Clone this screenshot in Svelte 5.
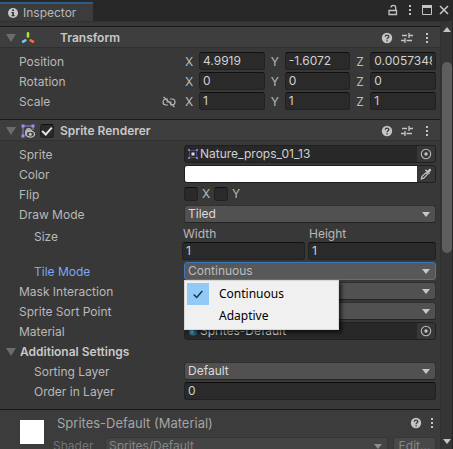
<script>
  const transform = [
    { name: 'Position', values: ['4.9919', '-1.6072', '0.0057348'] },
    { name: 'Rotation', values: ['0', '0', '0'] },
    { name: 'Scale', values: ['1', '1', '1'], link: true }
  ];
  const axes = ['X', 'Y', 'Z'];
  const modes = ['Continuous', 'Adaptive'];
  let tileMode = $state('Continuous');
</script>

{#snippet dots()}
  <svg width="4" height="12" viewBox="0 0 4 12" fill="currentColor"><path d="M1 1h2v2H1zM1 5h2v2H1zM1 9h2v2H1z" /></svg>
{/snippet}

{#snippet help()}
  <svg width="12" height="12" viewBox="0 0 12 12">
    <circle cx="6" cy="6" r="5.2" fill="#c4c4c4" />
    <path d="M4.3 4.8C4.3 2.6 7.8 2.7 7.8 4.6 7.8 5.8 6.1 5.8 6.1 7.2M6.1 8.2v1.3" fill="none" stroke="#3e3e3e" stroke-width="1.4" />
  </svg>
{/snippet}

{#snippet sliders()}
  <svg width="12" height="12" viewBox="0 0 12 12" fill="none" stroke="#c4c4c4" stroke-width="1.3">
    <path d="M1 3.5h5M8.5 3.5H12M8 1v5M0 8.5h3.5M5.5 8.5H11M4 6v5" />
  </svg>
{/snippet}

{#snippet tri()}
  <svg class="tri" width="10" height="8" viewBox="0 0 10 8"><path d="M0 0h10L5 8z" fill="#6c6c6c" /></svg>
{/snippet}

{#snippet tools()}
  <div class="tools">
    <button aria-label="Help">{@render help()}</button>
    <button aria-label="Presets">{@render sliders()}</button>
    <button aria-label="More">{@render dots()}</button>
  </div>
{/snippet}

{#snippet arrow()}
  <svg class="arrow" width="8" height="5" viewBox="0 0 8 5"><path d="M0 0h8L4 5z" fill="currentColor" /></svg>
{/snippet}

{#snippet target()}
  <button class="pick" aria-label="Select object">
    <svg width="12" height="12" viewBox="0 0 12 12"><circle cx="6" cy="6" r="4.7" fill="none" stroke="#b8b8b8" stroke-width="1.1" /><circle cx="6" cy="6" r="1.7" fill="#c4c4c4" /></svg>
  </button>
{/snippet}

{#snippet dropdown(id, value)}
  <div class="drop">
    <select {id}><option>{value}</option></select>
    {@render arrow()}
  </div>
{/snippet}

<div class="window">
  <header class="tabs">
    <div class="tab">
      <svg width="10" height="10" viewBox="0 0 10 10"><circle cx="5" cy="5" r="5" fill="#c8c8c8" /><path d="M4.2 1.4h1.8v1.5H4.2zM3.4 4h2.5v3.2h.8v1H3.4v-1h.8V5h-.8z" fill="#333" /></svg>
      <span>Inspector</span>
    </div>
    <div class="winbtns">
      <button aria-label="Lock"><svg width="10" height="12" viewBox="0 0 10 12" fill="none" stroke="currentColor" stroke-width="1.3"><path d="M1 6.5h7.5v4H1zM7.7 6V3.6C7.7.7 3 .7 3 3.4" /></svg></button>
      <button aria-label="More">{@render dots()}</button>
      <button aria-label="Maximize"><svg width="10" height="10" viewBox="0 0 10 10"><path d="M.5.5h9v9h-9z" fill="none" stroke="currentColor" /><path d="M0 0h10v3H0z" fill="currentColor" /></svg></button>
      <button aria-label="Close"><svg width="10" height="10" viewBox="0 0 10 10"><path d="M1 1l8 8M9 1L1 9" stroke="currentColor" stroke-width="1.6" /></svg></button>
    </div>
  </header>

  <div class="body">
    <main>
      <div class="head">
        {@render tri()}
        <svg class="icon" width="14" height="14" viewBox="0 0 14 14" fill="none" stroke-width="2.6" stroke-linecap="round">
          <path d="M7 2.4v3" stroke="#a5e635" /><path d="M4.4 9.3L2 10.6" stroke="#73c9f5" /><path d="M9.6 9.3L12 10.6" stroke="#ff6b3d" />
        </svg>
        <h2>Transform</h2>
        {@render tools()}
      </div>
      <section class="rows">
        {#each transform as t}
          <div class="row">
            <span class="label">{t.name}
              {#if t.link}
                <svg class="link" width="14" height="12" viewBox="0 0 14 12" fill="none" stroke="#b4b4b4" stroke-width="1.2">
                  <path d="M6 3H4a3 3 0 0 0 0 6h2M8 3h2a3 3 0 0 1 0 6H8M4.5 6h5M1.5 1l11 10" />
                </svg>
              {/if}
            </span>
            <div class="vector">
              {#each t.values as v, i}
                <label><span>{axes[i]}</span><input type="text" value={v} /></label>
              {/each}
            </div>
          </div>
        {/each}
      </section>

      <div class="head">
        {@render tri()}
        <svg class="icon" width="14" height="14" viewBox="0 0 14 14">
          <path d="M2 12V2h10v4" fill="none" stroke="#9a7fe0" />
          <path d="M.5.5h3v3h-3zM10.5.5h3v3h-3zM.5 10.5h3v3h-3z" fill="#a58af0" />
          <path d="M4 12V7l2-3h3l2 2v2L6 9z" fill="#a8a8a8" />
          <ellipse cx="9.3" cy="10.2" rx="4.2" ry="3" fill="#3e3e3e" stroke="#c4c4c4" stroke-width="1.2" /><circle cx="9.3" cy="10.2" r="1.5" fill="#c4c4c4" />
        </svg>
        <input class="check" type="checkbox" aria-label="Enable Sprite Renderer" checked />
        <h2>Sprite Renderer</h2>
        {@render tools()}
      </div>
      <section class="rows">
        <div class="row">
          <label class="label" for="sprite">Sprite</label>
          <div class="object">
            <svg width="10" height="10" viewBox="0 0 10 10"><path d="M1.5 1.5h7v7h-7z" fill="none" stroke="#51477a" /><path d="M0 0h2v2H0zM8 0h2v2H8zM0 8h2v2H0zM8 8h2v2H8z" fill="#8a76c8" /><path d="M3.5 3.5h3v3h-3z" fill="#ddd" /></svg>
            <input id="sprite" type="text" value="Nature_props_01_13" readonly />
            {@render target()}
          </div>
        </div>
        <div class="row">
          <span class="label">Color</span>
          <div class="object color">
            <button class="swatch" aria-label="Color"></button>
            <button class="pick" aria-label="Pick color">
              <svg width="12" height="12" viewBox="0 0 12 12" fill="#c4c4c4"><path d="M7.5 2.8L9 1.2c1.2-1.2 3 .6 1.8 1.8L9.2 4.5l.7.8-1 1-4-4 1-1z" /><path d="M6.2 4.6l1.5 1.5-4 4-2.4.7.7-2.4z" fill="none" stroke="#c4c4c4" stroke-width="1.2" /></svg>
            </button>
          </div>
        </div>
        <div class="row">
          <span class="label">Flip</span>
          <div class="flip">
            <label><input class="check" type="checkbox" /><span>X</span></label>
            <label><input class="check" type="checkbox" /><span>Y</span></label>
          </div>
        </div>
        <div class="row">
          <label class="label" for="draw">Draw Mode</label>
          {@render dropdown('draw', 'Tiled')}
        </div>
        <div class="row sub">
          <span class="label">Size</span>
          <div class="size">
            <label><span>Width</span><input type="text" value="1" /></label>
            <label><span>Height</span><input type="text" value="1" /></label>
          </div>
        </div>
        <div class="row sub active">
          <label class="label" for="tile">Tile Mode</label>
          <div class="drop">
            <select id="tile" bind:value={tileMode}>
              {#each modes as m}<option>{m}</option>{/each}
            </select>
            {@render arrow()}
            <div class="menu" role="menu">
              {#each modes as m}
                <button role="menuitemradio" aria-checked={m === tileMode} onclick={() => (tileMode = m)}>
                  <span class="mark" class:on={m === tileMode}>
                    {#if m === tileMode}<svg width="10" height="9" viewBox="0 0 10 9"><path d="M.7 4.5L3.7 7.5 9.3 1" fill="none" stroke="#16384f" stroke-width="1.5" /></svg>{/if}
                  </span>{m}
                </button>
              {/each}
            </div>
          </div>
        </div>
        <div class="row">
          <label class="label" for="mask">Mask Interaction</label>
          {@render dropdown('mask', 'None')}
        </div>
        <div class="row">
          <label class="label" for="sort">Sprite Sort Point</label>
          {@render dropdown('sort', 'Center')}
        </div>
        <div class="row">
          <label class="label" for="material">Material</label>
          <div class="object">
            <svg width="10" height="10" viewBox="0 0 10 10"><circle cx="5" cy="5" r="4.6" fill="#2d6a8c" /><circle cx="4" cy="5" r="2.4" fill="#6ec3ea" /></svg>
            <input id="material" type="text" value="Sprites-Default" readonly />
            {@render target()}
          </div>
        </div>
        <div class="fold">{@render tri()}<h3>Additional Settings</h3></div>
        <div class="row sub">
          <label class="label" for="layer">Sorting Layer</label>
          {@render dropdown('layer', 'Default')}
        </div>
        <div class="row sub">
          <label class="label" for="order">Order in Layer</label>
          <input id="order" type="text" value="0" />
        </div>
      </section>

      <section class="material">
        <div class="thumb"></div>
        <div class="minfo">
          <div class="mtitle">
            <h2>Sprites-Default (Material)</h2>
            <button aria-label="Help">{@render help()}</button>
            <button aria-label="More">{@render dots()}</button>
          </div>
          <div class="shader">
            <label for="shader">Shader</label>
            {@render dropdown('shader', 'Sprites/Default')}
            <button class="edit">Edit...</button>
          </div>
        </div>
      </section>
    </main>

    <aside class="scroll">
      <svg width="8" height="5" viewBox="0 0 8 5"><path d="M0 5h8L4 0z" fill="#c4c4c4" /></svg>
      <div class="track"><div class="thumbbar"></div></div>
      <svg width="8" height="5" viewBox="0 0 8 5"><path d="M0 0h8L4 5z" fill="#c4c4c4" /></svg>
    </aside>
  </div>
</div>

<style>
  .window {
    height: 100vh;
    overflow: hidden;
    display: flex;
    flex-direction: column;
    background: #383838;
    color: #b8b8b8;
    font: 12px/18px Inter, sans-serif;
  }
  .window * { box-sizing: border-box; }
  button, input, select { font: inherit; color: inherit; margin: 0; }
  button { background: none; border: 0; padding: 0; display: flex; align-items: center; justify-content: center; }
  svg { display: block; flex: none; }
  h2, h3 { margin: 0; font-size: 12px; font-weight: 600; color: #c8c8c8; }

  .tabs { display: flex; justify-content: space-between; height: 21px; flex: none; background: #282828; }
  .tab {
    display: flex; align-items: center; gap: 5px;
    margin-top: 2px; padding: 0 17px 0 8px;
    background: #3c3c3c; border-top: 2px solid #2c5d87;
  }
  .winbtns { display: flex; align-items: center; gap: 7px; padding: 0 4px 1px 0; color: #c4c4c4; }
  .winbtns button { min-width: 10px; }

  .body { flex: 1; min-height: 0; display: flex; border-top: 1px solid #303030; }
  main { flex: 1; min-width: 0; overflow: hidden; padding-top: 4px; border-right: 1px solid #303030; }
  .head {
    display: flex; align-items: center; height: 22px; padding: 1px 11px 0 6px;
    background: #3e3e3e; border-top: 1px solid #1a1a1a; border-bottom: 1px solid #303030;
  }
  .icon { margin: 0 5px 0 5px; }
  .head h2 { flex: 1; padding-left: 6px; }
  .head .icon + h2 { padding-left: 20px; }
  .tools { display: flex; gap: 8px; color: #c4c4c4; }
  .tools button { width: 12px; }
  .tools button:last-child { width: 12px; margin-right: -4px; }

  .rows { display: flex; flex-direction: column; gap: 2px; padding: 4px 4px 9px 0; }
  .row { display: grid; grid-template-columns: 165px minmax(0, 1fr); padding-left: 19px; }
  .row.sub { padding-left: 34px; grid-template-columns: 150px minmax(0, 1fr); }
  .label { display: flex; align-items: center; justify-content: space-between; padding-top: 1px; height: 18px; white-space: nowrap; }
  .link { margin-right: 8px; }

  input[type='text'] {
    width: 100%; min-width: 0; height: 18px; padding: 0 3px;
    background: #2a2a2a; color: #d0d0d0;
    border: 1px solid #212121; border-top-color: #0f0f0f; border-radius: 3px; outline: 0;
  }
  .vector { display: grid; grid-template-columns: repeat(3, minmax(0, 1fr)); gap: 5px; }
  .vector label { display: flex; }
  .vector span { width: 15px; padding: 1px 0 0 1px; height: 18px; flex: none; }

  .check {
    appearance: none; width: 14px; height: 14px; flex: none;
    background: #2a2a2a; border: 1px solid #212121; border-top-color: #0f0f0f; border-radius: 3px;
    display: grid; place-items: center;
  }
  .check:checked::after {
    content: ''; width: 8px; height: 4px;
    border: solid #e6e6e6; border-width: 0 0 2px 2px; transform: translateY(-1px) rotate(-48deg);
  }
  .flip { display: flex; gap: 5px; }
  .flip label { display: flex; align-items: center; gap: 4px; width: 25px; height: 18px; }

  .object {
    display: flex; align-items: center; height: 18px; padding-left: 3px; overflow: hidden;
    background: #282828; border: 1px solid #202020; border-radius: 3px;
  }
  .object input[type='text'] { border: 0; background: none; height: 16px; padding: 0 2px; flex: 1; }
  .pick { width: 18px; height: 16px; background: #373737; flex: none; }
  .object.color { padding-left: 0; }
  .swatch { flex: 1; height: 16px; background: #fff; }

  .drop { position: relative; height: 18px; min-width: 0; }
  select {
    appearance: none; display: block; width: 100%; height: 18px; padding: 0 18px 1px 3px;
    background: #515151; color: #dadada; line-height: 15px;
    border: 1px solid #303030; border-bottom-color: #242424; border-radius: 3px; outline: 0;
  }
  .arrow { position: absolute; right: 6px; top: 7px; color: #c8c8c8; pointer-events: none; }
  .active .label { color: #7ba8f0; }
  .active select { border-color: #3a79bb; background: #585858; color: #bdbdbd; }

  .menu {
    position: absolute; z-index: 2; top: 18px; left: 0; width: 155px; padding: 2px;
    background: #f0f0f0; border: 1px solid #d8d8d8; box-shadow: 3px 3px 3px rgb(0 0 0 / 55%);
    font-family: 'Noto Sans', sans-serif; color: #000;
  }
  .menu button { width: 100%; height: 22px; justify-content: flex-start; gap: 10px; }
  .mark { display: grid; place-items: center; width: 22px; height: 22px; }
  .mark.on { background: #91c9f7; }

  .size { display: grid; grid-template-columns: 49fr 51fr; gap: 3px; margin-left: -2px; }
  .size span { display: block; height: 17px; line-height: 17px; padding-left: 1px; }
  .size input { display: block; }
  .size label { min-width: 0; }
  .sub:has(.size) .label { padding-top: 3px; height: 20px; }

  .fold { display: flex; align-items: center; gap: 4px; height: 18px; padding: 1px 0 0 6px; }

  .material {
    display: flex; padding: 10px 4px 0 20px; border-top: 1px solid #1a1a1a; background: #3c3c3c;
  }
  .thumb { width: 24px; height: 24px; background: #fff; flex: none; }
  .minfo { flex: 1; min-width: 0; padding-left: 9px; display: flex; flex-direction: column; gap: 5px; margin-top: -6px; }
  .mtitle { display: flex; align-items: center; gap: 8px; height: 18px; padding-right: 2px; color: #c4c4c4; }
  .mtitle h2 { flex: 1; font-size: 13px; font-weight: 400; color: #a4a4a4; padding-left: 4px; }
  .shader { display: flex; gap: 5px; color: #747474; }
  .shader label { width: 47px; }
  .shader .drop { flex: 1; }
  .shader select { background: #444; color: #868686; border-color: #363636; }
  .shader .arrow { color: #8e8e8e; }
  .edit { width: 43px; height: 18px; background: #484848; border: 1px solid #363636; border-radius: 3px; color: #868686; }

  .scroll { width: 12px; display: flex; flex-direction: column; align-items: center; padding: 5px 0; background: #353535; border-right: 1px solid #242424; }
  .track { flex: 1; width: 10px; padding: 30px 0; }
  .thumbbar { height: 55%; border-radius: 5px; background: #5e5e5e; }
</style>
